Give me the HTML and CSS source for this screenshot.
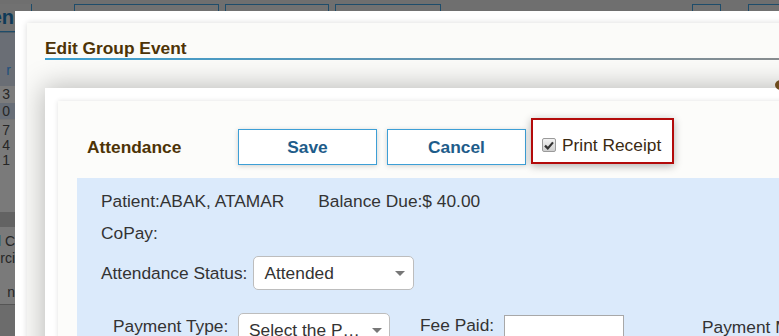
FILE: index.html
```html
<!DOCTYPE html>
<html lang="en">
<head>
  <meta charset="UTF-8">
  <meta name="viewport" content="width=device-width, initial-scale=1.0">
  <title>Edit Group Event</title>
  <link rel="stylesheet" href="styles.css">
</head>
<body>

  <!-- Page behind the modal (dimmed) -->
  <div class="page">
    <div class="toolbar">
      <span class="tb-btn tb-first">Open</span>
      <span class="tb-btn tb-2"></span>
      <span class="tb-btn tb-3"></span>
      <span class="tb-btn tb-4"></span>
      <span class="tb-date">09:41 AM 2019 - 10:41 AM 2019</span>
      <span class="tb-btn tb-5"></span>
      <span class="tb-btn tb-6"></span>
    </div>

    <div class="side">
      <div class="side-row row-a"><span class="blue">r</span></div>
      <div class="side-row row-b"><span>3</span></div>
      <div class="side-row row-c"><span>0</span></div>
      <div class="side-row row-d">
        <span>7</span>
        <span>4</span>
        <span>1</span>
      </div>
      <div class="side-row row-e"></div>
      <div class="side-row row-f">
        <span><em class="blue">l</em> C</span>
        <span>rci</span>
        <span>&nbsp;</span>
        <span>n</span>
      </div>
      <div class="side-row row-g"></div>
    </div>
  </div>

  <!-- Edit Group Event dialog -->
  <div class="dialog">
    <div class="dlg-inner">
      <h1 class="dlg-title">Edit Group Event</h1>
      <span class="dlg-close"></span>

      <div class="sub-frame">
        <div class="card">

          <div class="card-head">
            <div class="head-title">Attendance</div>
            <button type="button" class="btn">Save</button>
            <button type="button" class="btn btn-cancel">Cancel</button>
            <label class="receipt">
              <span class="check">
                <svg width="10" height="9" viewBox="0 0 10 9"><path d="M1 4.6 L3.8 7.4 L9 1.4" fill="none" stroke="#333" stroke-width="2.2"/></svg>
              </span>
              Print Receipt
            </label>
          </div>

          <div class="panel">
            <div class="info-row">
              <span>Patient:ABAK, ATAMAR</span>
              <span>Balance Due:$ 40.00</span>
            </div>
            <div class="info-row copay">CoPay:</div>

            <div class="field-row status-row">
              <span class="status-label">Attendance Status:</span>
              <div class="select sel-status">Attended<i class="arrow"></i></div>
            </div>

            <div class="field-row pay-row">
              <span class="pay-label">Payment Type:</span>
              <div class="select sel-pay">Select the P…<i class="arrow"></i></div>
              <span class="fee-label">Fee Paid:</span>
              <input type="text" class="fee-input">
              <span class="method-label">Payment Method:</span>
            </div>
          </div>

        </div>
      </div>
    </div>
  </div>

</body>
</html>
```

FILE: styles.css
```css
/* General Reset */
* {
  margin: 0;
  padding: 0;
  box-sizing: border-box;
}

body {
  font-family: "Liberation Sans", Arial, sans-serif;
  font-size: 13pt;
  color: #333;
  background: #6f6f6f;
  overflow: hidden;
  width: 779px;
  height: 336px;
  position: relative;
}

/* Dimmed page behind the modal */
.page {
  width: 779px;
  height: 336px;
  overflow: hidden;
}

.toolbar {
  display: flex;
  align-items: flex-start;
  height: 33px;
  padding-top: 4px;
  border-bottom: 1px solid #4f5d68;
}

.tb-btn {
  display: flex;
  align-items: center;
  height: 28px;
  border: 1px solid #1e4c6a;
  background: #717171;
  flex: none;
}

.tb-first {
  width: 62px;
  margin-left: -30px;
  justify-content: flex-end;
  padding-right: 17px;
  font-size: 20px;
  font-weight: bold;
  color: #0f3a58;
  border-top: none;
}

.tb-2 { width: 145px; margin-left: 42px; }
.tb-3 { width: 104px; margin-left: 6px; }
.tb-4 { width: 106px; margin-left: 6px; }
.tb-5 { width: 29px; margin-left: 18px; }
.tb-6 { width: 60px; margin-left: 27px; }

.tb-date {
  flex: none;
  margin: 4px 0 0 17px;
  width: 216px;
  font-size: 14px;
  font-weight: bold;
  color: #2a2a2a;
  white-space: nowrap;
  overflow: hidden;
}

.side {
  width: 15px;
}

.side-row {
  display: flex;
  flex-direction: column;
  align-items: flex-end;
  font-size: 14px;
  line-height: 15px;
  color: #262626;
  white-space: nowrap;
}

.side-row span {
  display: block;
}

.blue {
  color: #1e4f7d;
  font-style: normal;
}

.row-a {
  height: 53px;
  background: #6a6e75;
  justify-content: flex-end;
  padding-bottom: 8px;
  padding-right: 4px;
}

.row-b {
  height: 17px;
  background: #7c7c7c;
  padding: 1px 5px 0 0;
}

.row-c {
  height: 17px;
  background: #686e77;
  padding: 1px 5px 0 0;
  border-bottom: 1px solid #747474;
}

.row-d {
  height: 92px;
  background: #7a7a7a;
  padding: 3px 5px 0 0;
}

.row-e {
  height: 15px;
  background: #636363;
}

.row-f {
  height: 78px;
  background: #7a7a7a;
  padding-top: 6px;
  border-bottom: 1px solid #555;
}

.row-f span {
  line-height: 17px;
}

.row-g {
  height: 40px;
  background: #6c6c6c;
}

/* Modal dialog */
.dialog {
  position: absolute;
  left: 15px;
  top: 11px;
  width: 800px;
  height: 360px;
  background: #fff;
  overflow: hidden;
}

.dlg-inner {
  position: relative;
  margin: 12px 0 0 12px;
  height: 400px;
  background: #fbfbf9;
  box-shadow: 0 0 6px rgba(0, 0, 0, 0.15);
  padding: 15px 0 0 18px;
  overflow: hidden;
}

.dlg-title {
  font-size: 13pt;
  font-weight: bold;
  line-height: 20px;
  color: #4d3306;
  border-bottom: 2px solid transparent;
  border-image: linear-gradient(90deg, #3aa0d2, #5f95b4 45%, #8c8c8c) 1;
}

.dlg-close {
  position: absolute;
  left: 748px;
  top: 57px;
  width: 12px;
  height: 10px;
  border-radius: 50%;
  background: #6e4b1c;
}

.sub-frame {
  margin-top: 28px;
  background: #fff;
  padding: 13px 0 0 13px;
  height: 320px;
  box-shadow: 0 0 26px 2px rgba(0, 0, 0, 0.26);
}

.card {
  background: #fcfcfa;
  box-shadow: 0 0 5px rgba(0, 0, 0, 0.12);
  padding-left: 19px;
  height: 320px;
}

.card-head {
  display: flex;
  align-items: flex-start;
  padding: 17px 0 13px 10px;
}

.head-title {
  width: 151px;
  flex: none;
  margin-top: 11px;
  line-height: 36px;
  font-weight: bold;
  color: #4d3306;
}

.btn {
  flex: none;
  width: 139px;
  height: 36px;
  margin-top: 11px;
  margin-right: 10px;
  border: 1px solid #3d9fd6;
  background: #fff;
  font-family: inherit;
  font-size: 13pt;
  font-weight: bold;
  color: #1e5c8a;
  box-shadow: 0 1px 5px rgba(0, 0, 0, 0.18);
}

.btn-cancel {
  margin-right: 5px;
}

.receipt {
  flex: none;
  display: flex;
  align-items: center;
  gap: 6px;
  height: 46px;
  padding: 8px 11px 0 9px;
  border: 2px solid #b30b0b;
  background: #fff;
  box-shadow: 0 2px 8px rgba(0, 0, 0, 0.3);
  color: #3a2a12;
  line-height: 20px;
  white-space: nowrap;
}

.check {
  flex: none;
  display: flex;
  align-items: center;
  justify-content: center;
  width: 14px;
  height: 14px;
  border: 1px solid #9a9a9a;
  border-radius: 2px;
  background: linear-gradient(#f2f2f2, #cfcfcf);
}

/* Blue details panel */
.panel {
  background: #dbeafb;
  padding: 13px 0 0 24px;
  height: 200px;
  line-height: 20px;
}

.info-row {
  display: flex;
  gap: 34px;
}

.copay {
  margin-top: 12px;
}

.field-row {
  display: flex;
}

.field-row > * {
  flex: none;
}

.status-row {
  align-items: center;
  margin-top: 13px;
}

.status-label {
  margin-right: 6px;
}

.select {
  position: relative;
  height: 34px;
  line-height: 32px;
  padding-left: 10px;
  border: 1px solid #bdbdbd;
  border-radius: 5px;
  background: #fff;
  white-space: nowrap;
}

.arrow {
  position: absolute;
  top: 14px;
  right: 8px;
  border-left: 5px solid transparent;
  border-right: 5px solid transparent;
  border-top: 5px solid #777;
}

.sel-status {
  width: 161px;
}

.sel-pay {
  width: 152px;
}

.sel-pay .arrow {
  right: 7px;
}

.pay-row {
  align-items: flex-start;
  margin-top: 23px;
  padding-left: 12px;
}

.pay-label {
  width: 125px;
  margin-top: 3px;
}

.fee-label {
  width: 84px;
  margin: 2px 0 0 30px;
}

.fee-input {
  width: 120px;
  height: 30px;
  margin-top: 2px;
  border: 1px solid #a8a8a8;
  background: #fff;
}

.method-label {
  margin: 4px 0 0 78px;
  white-space: nowrap;
}
```
